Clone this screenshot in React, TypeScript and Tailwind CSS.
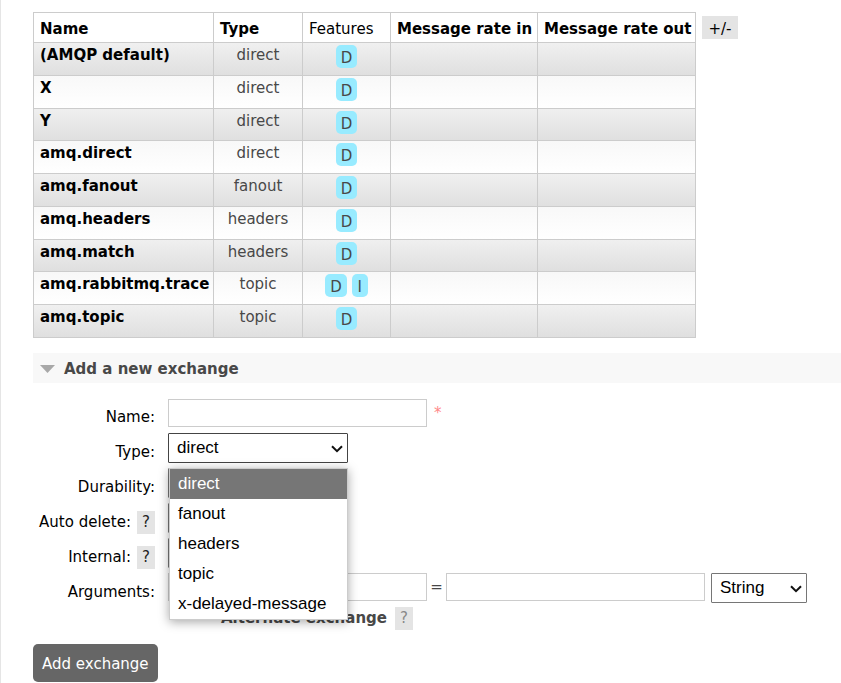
import type { ComponentProps, ReactNode } from "react";

type Exchange = { name: string; type: string; features: string[] };

const exchanges: Exchange[] = [
  { name: "(AMQP default)", type: "direct", features: ["D"] },
  { name: "X", type: "direct", features: ["D"] },
  { name: "Y", type: "direct", features: ["D"] },
  { name: "amq.direct", type: "direct", features: ["D"] },
  { name: "amq.fanout", type: "fanout", features: ["D"] },
  { name: "amq.headers", type: "headers", features: ["D"] },
  { name: "amq.match", type: "headers", features: ["D"] },
  { name: "amq.rabbitmq.trace", type: "topic", features: ["D", "I"] },
  { name: "amq.topic", type: "topic", features: ["D"] },
];

const exchangeTypes = ["direct", "fanout", "headers", "topic", "x-delayed-message"];

const cell = "border border-[#ccc]";
const headCell = "border border-[#ccc] pl-[6px] pt-[6px] whitespace-nowrap";
const textBox = "h-7 w-[259px] border border-[#ccc] bg-white px-1";

function HelpButton({ faded = false }: { faded?: boolean }) {
  return (
    <button
      type="button"
      aria-label="Help"
      className={`h-[23px] w-[18px] bg-[#e4e4e4] text-center leading-[23px] ${faded ? "text-[#888]" : "text-[#222]"}`}
    >
      ?
    </button>
  );
}

function DropDown({
  options,
  className,
  ...rest
}: { options: string[] } & ComponentProps<"select">) {
  return (
    <div className="relative">
      <select
        {...rest}
        className={`block h-[30px] appearance-none rounded-[1px] border bg-white pl-2 font-['Liberation_Sans',Arial,sans-serif] text-[17px] leading-7 text-black ${className}`}
      >
        {options.map((o) => (
          <option key={o}>{o}</option>
        ))}
      </select>
      <svg
        width="12"
        height="8"
        viewBox="0 0 12 8"
        aria-hidden="true"
        className="pointer-events-none absolute top-3 right-[5px]"
      >
        <path d="M1 1.2l5 5 5-5" fill="none" stroke="#111" strokeWidth="2" />
      </svg>
    </div>
  );
}

function Row({
  id,
  label,
  help = false,
  children,
}: {
  id: string;
  label: string;
  help?: boolean;
  children: ReactNode;
}) {
  return (
    <div className="flex h-[35px] items-start">
      <div className="mr-[13px] flex w-[122px] shrink-0 items-center justify-end gap-[6px] pt-2 leading-[23px]">
        <label htmlFor={id} className="whitespace-nowrap text-black">
          {label}
        </label>
        {help && <HelpButton />}
      </div>
      {children}
    </div>
  );
}

function ExchangeTable() {
  return (
    <table className="h-[326px] w-[663px] table-fixed border-collapse">
      <thead>
        <tr className="h-[30px] text-left align-top text-black">
          <th className={`${headCell} w-[180px] font-bold`}>Name</th>
          <th className={`${headCell} w-[89px] font-bold`}>Type</th>
          <th className={`${headCell} w-[88px] font-normal`}>Features</th>
          <th className={`${headCell} w-[147px] font-bold`}>Message rate in</th>
          <th className={`${headCell} w-[158px] font-bold`}>Message rate out</th>
        </tr>
      </thead>
      <tbody>
        {exchanges.map((x) => (
          <tr
            key={x.name}
            className="h-8 bg-linear-to-b align-top odd:from-[#f0f0f0] odd:to-[#dfdfdf] even:from-[#f8f8f8] even:to-white"
          >
            <td className={`${cell} pt-[2px] pl-[6px]`}>
              <a href="#exchange" className="font-bold whitespace-nowrap text-black">
                {x.name}
              </a>
            </td>
            <td className={`${cell} pt-[2px] text-center`}>{x.type}</td>
            <td className={`${cell} pt-[2px]`}>
              <div className="flex justify-center gap-[5px]">
                {x.features.map((f) => (
                  <span
                    key={f}
                    className="h-[23px] min-w-4 rounded-[5px] bg-[#98ebff] px-[5px] text-center leading-[26px]"
                  >
                    {f}
                  </span>
                ))}
              </div>
            </td>
            <td className={cell} />
            <td className={cell} />
          </tr>
        ))}
      </tbody>
    </table>
  );
}

function TypeSelect() {
  return (
    <div className="relative">
      <DropDown id="type" options={exchangeTypes} className="w-[180px] border-[#444]" />
      <ul
        role="listbox"
        aria-label="Type"
        className="absolute top-[35px] left-px z-10 w-[179px] border border-[#ccc] bg-white font-['Liberation_Sans',Arial,sans-serif] text-[17px] leading-[30px] text-black shadow-[0_2px_10px_rgba(0,0,0,0.35)]"
      >
        {exchangeTypes.map((t, i) => (
          <li
            key={t}
            role="option"
            aria-selected={i === 0}
            className="px-2 whitespace-nowrap aria-selected:bg-[#767676] aria-selected:text-white"
          >
            {t}
          </li>
        ))}
      </ul>
    </div>
  );
}

function AddExchangeForm() {
  return (
    <form onSubmit={(e) => e.preventDefault()} className="mt-[15px]">
      <Row id="name" label="Name:">
        <input id="name" type="text" className={`${textBox} mt-px`} />
        <span className="ml-[7px] leading-[30px] text-[#f88]">*</span>
      </Row>
      <Row id="type" label="Type:">
        <TypeSelect />
      </Row>
      <Row id="durability" label="Durability:">
        <DropDown id="durability" options={["Durable", "Transient"]} className="w-[110px] border-[#767676]" />
      </Row>
      <Row id="auto-delete" label="Auto delete:" help>
        <DropDown id="auto-delete" options={["No", "Yes"]} className="w-[64px] border-[#767676]" />
      </Row>
      <Row id="internal" label="Internal:" help>
        <DropDown id="internal" options={["No", "Yes"]} className="w-[64px] border-[#767676]" />
      </Row>
      <Row id="arguments" label="Arguments:">
        <input id="arguments" type="text" className={textBox} />
        <span className="w-[19px] text-center leading-7">=</span>
        <input type="text" aria-label="Argument value" className={`${textBox} mr-[6px]`} />
        <DropDown
          aria-label="Argument type"
          options={["String", "Number", "Boolean", "List"]}
          className="w-24 border-[#767676]"
        />
      </Row>
      <div className="-mt-[3px] flex items-center gap-2 pt-[2px] pl-[188px] leading-[23px]">
        <button type="button" className="font-bold whitespace-nowrap">
          Alternate exchange
        </button>
        <HelpButton faded />
      </div>
      <button
        type="submit"
        className="mt-[14px] h-[38px] rounded-[5px] bg-[#666] px-[9px] pt-[2px] whitespace-nowrap text-white"
      >
        Add exchange
      </button>
    </form>
  );
}

export default function App() {
  return (
    <main className="min-h-screen overflow-hidden border-l border-[#e5e5e5] bg-white pt-3 pl-8 font-['DejaVu_Sans',Verdana,sans-serif] text-[15px] leading-5 text-[#484848]">
      <div className="flex items-start gap-[6px]">
        <ExchangeTable />
        <button
          type="button"
          className="mt-1 h-[23px] w-9 bg-[#e4e4e4] pt-[2px] leading-[23px] text-black"
        >
          +/-
        </button>
      </div>
      <section>
        <h2 className="mt-[15px] flex h-[30px] items-center gap-[9px] bg-[#f8f8f8] pt-[2px] pl-[7px] font-bold">
          <svg width="15" height="8" viewBox="0 0 15 8" aria-hidden="true">
            <path d="M0 0h15L7.5 8z" fill="#a8a8a8" />
          </svg>
          Add a new exchange
        </h2>
        <AddExchangeForm />
      </section>
    </main>
  );
}
